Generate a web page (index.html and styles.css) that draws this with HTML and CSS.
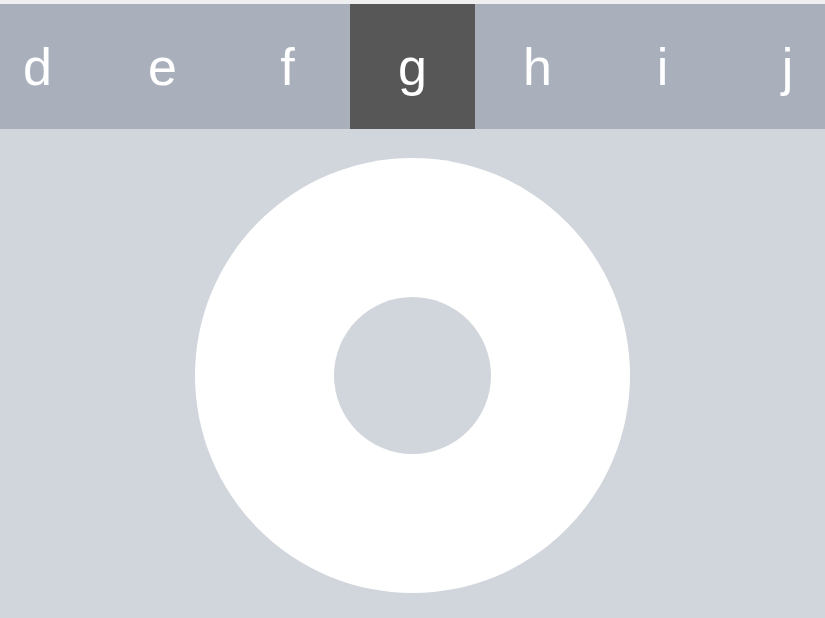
FILE: index.html
```html
<!DOCTYPE html>
<html>
<head>
<meta charset="utf-8">
<link rel="stylesheet" href="styles.css">
</head>
<body>
<div class="topline"></div>
<nav class="picker">
  <div class="cell">d</div>
  <div class="cell">e</div>
  <div class="cell">f</div>
  <div class="cell selected">g</div>
  <div class="cell">h</div>
  <div class="cell">i</div>
  <div class="cell">j</div>
</nav>
<main class="stage">
  <div class="wheel">
    <div class="hole"></div>
  </div>
</main>
</body>
</html>
```
FILE: styles.css
```css
html, body {
  margin: 0;
  padding: 0;
  height: 100%;
  overflow: hidden;
}
body {
  background: #d1d5dc;
  font-family: "Liberation Sans", Arial, sans-serif;
  display: flex;
  flex-direction: column;
}
.topline {
  height: 4px;
  background: #efefef;
  flex: none;
}
.picker {
  display: flex;
  height: 125px;
  flex: none;
  background: #a9b0bc;
  overflow: hidden;
}
.cell {
  flex: none;
  width: 125px;
  height: 125px;
  box-sizing: border-box;
  padding-top: 2px;
  line-height: 123px;
  text-align: center;
  color: #ffffff;
  font-size: 52px;
}
.cell:first-child {
  margin-left: -25px;
}
.cell.selected {
  background: #575757;
}
.stage {
  flex: 1;
  display: flex;
  justify-content: center;
  align-items: flex-start;
  padding-top: 29px;
}
.wheel {
  width: 435px;
  height: 435px;
  border-radius: 50%;
  background: #ffffff;
  display: flex;
  justify-content: center;
  align-items: center;
}
.hole {
  width: 157px;
  height: 157px;
  border-radius: 50%;
  background: #d1d5dc;
}
```
